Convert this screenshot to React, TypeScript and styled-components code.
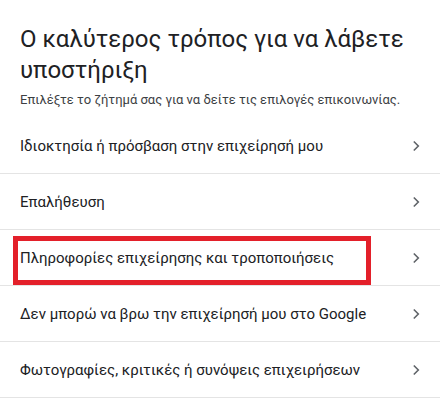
import styled, { createGlobalStyle } from 'styled-components';

const GlobalStyle = createGlobalStyle`
  body {
    margin: 0;
    background: #ffffff;
    font-family: Roboto, "Noto Sans", Arial, sans-serif;
  }
`;

const topics = [
  'Ιδιοκτησία ή πρόσβαση στην επιχείρησή μου',
  'Επαλήθευση',
  'Πληροφορίες επιχείρησης και τροποποιήσεις',
  'Δεν μπορώ να βρω την επιχείρησή μου στο Google',
  'Φωτογραφίες, κριτικές ή συνόψεις επιχειρήσεων',
];

const Page = styled.main`
  width: 440px;
  height: 399px;
  overflow: hidden;
  box-sizing: border-box;
  padding-top: 24px;
`;

const Header = styled.header`
  padding: 0 20px;
  margin-bottom: 8px;
`;

const Title = styled.h1`
  margin: 0;
  font-size: 24px;
  font-weight: 400;
  line-height: 31px;
  color: #202124;
`;

const Subtitle = styled.p`
  margin: 4px 0 0;
  font-size: 13px;
  line-height: 20px;
  color: #3c4043;
`;

const List = styled.ul`
  list-style: none;
  margin: 0;
  padding: 0;
`;

const Row = styled.li`
  position: relative;
  display: flex;
  align-items: center;
  justify-content: space-between;
  height: 55px;
  padding: 0 20px 0 20px;
  border-bottom: 1px solid #e4e4e4;
  font-size: 15px;
  color: #202124;
`;

const Highlight = styled.span`
  position: absolute;
  left: 13px;
  top: 6px;
  width: 358px;
  height: 49px;
  box-sizing: border-box;
  border: 5px solid #e3202a;
  pointer-events: none;
`;

const Chevron = () => (
  <svg width="8" height="12" viewBox="0 0 8 12" aria-hidden="true">
    <path d="M1.8 1.5 6.3 6l-4.5 4.5" fill="none" stroke="#5f6368" strokeWidth="1.6" />
  </svg>
);

export default function App() {
  return (
    <Page>
      <GlobalStyle />
      <Header>
        <Title>Ο καλύτερος τρόπος για να λάβετε υποστήριξη</Title>
        <Subtitle>Επιλέξτε το ζήτημά σας για να δείτε τις επιλογές επικοινωνίας.</Subtitle>
      </Header>
      <List>
        {topics.map((t, i) => (
          <Row key={t}>
            {i === 2 && <Highlight />}
            <span>{t}</span>
            <Chevron />
          </Row>
        ))}
      </List>
    </Page>
  );
}
